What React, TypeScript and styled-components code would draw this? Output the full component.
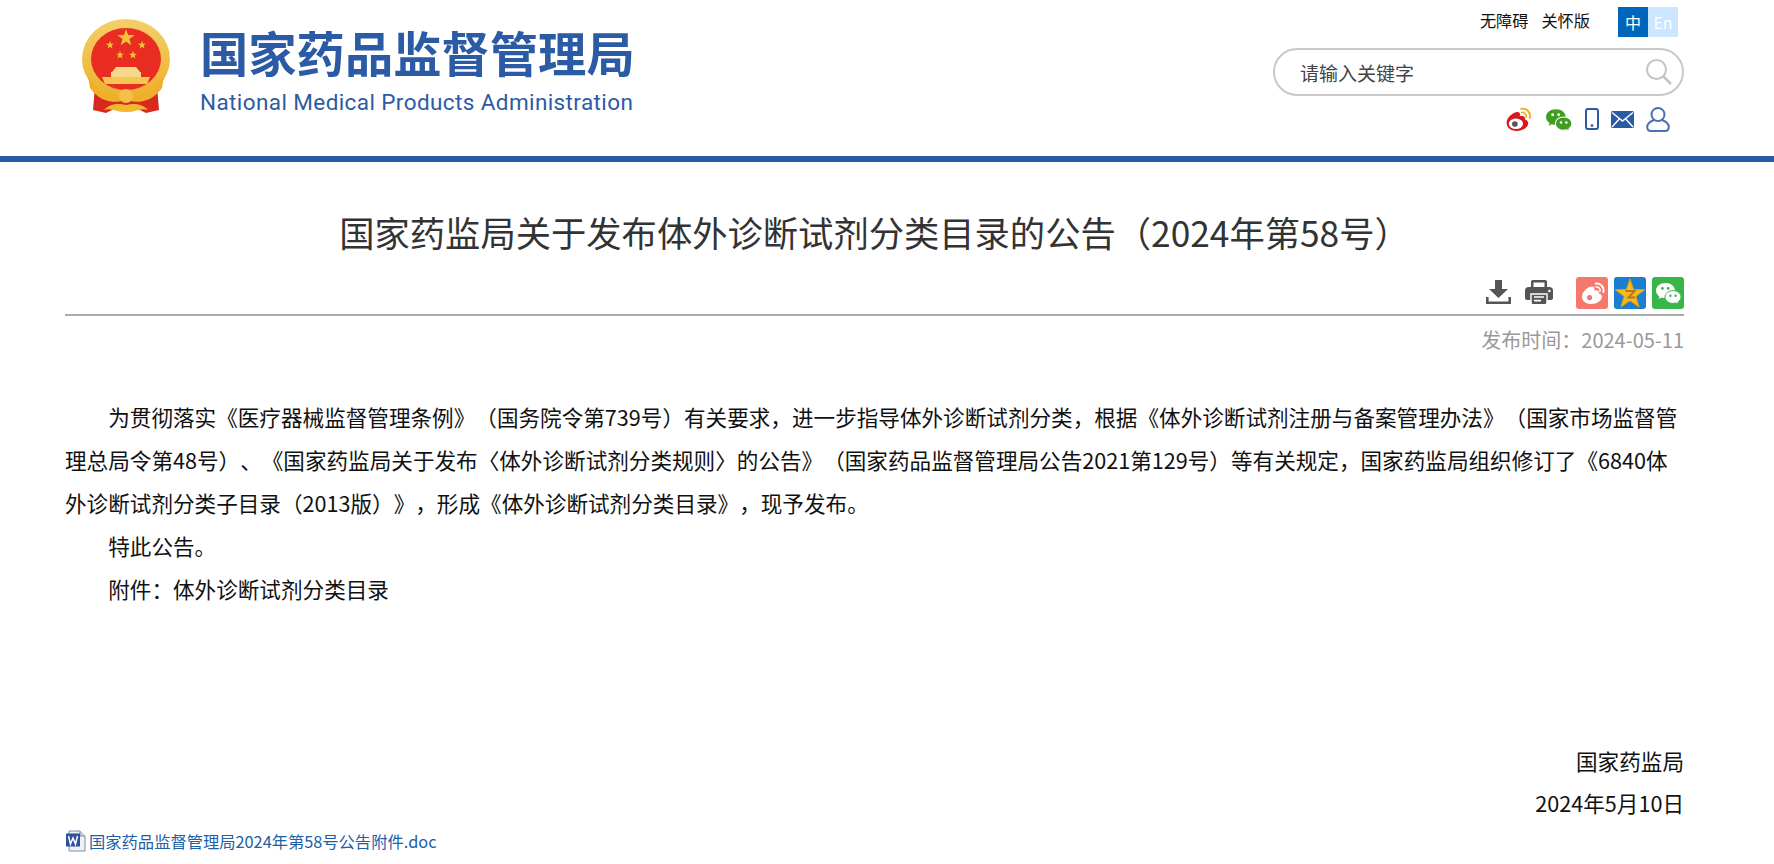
import React from 'react'
import styled, { createGlobalStyle } from 'styled-components'

const GlobalStyle = createGlobalStyle`
  html, body {
    margin: 0;
    padding: 0;
    background: #fff;
    font-family: "Noto Sans CJK SC", "Liberation Sans", sans-serif;
    text-spacing-trim: space-all;
  }
  a { text-decoration: none; }
`

const Page = styled.div`
  width: 1774px;
  height: 864px;
  overflow: hidden;
`

const Header = styled.header`
  height: 156px;
  display: flex;
  justify-content: space-between;
  padding: 0 90px 0 80px;
  box-sizing: border-box;
`

const Brand = styled.div`
  display: flex;
  align-items: flex-start;
  padding-top: 18px;
  gap: 28px;
`

const BrandText = styled.div`
  display: flex;
  flex-direction: column;
  color: #2c5ba6;
`

const BrandName = styled.div`
  font-size: 48.3px;
  line-height: 66px;
  font-weight: 700;
  white-space: nowrap;
`

const BrandEn = styled.div`
  font-family: "Roboto", "Liberation Sans", sans-serif;
  font-size: 22.5px;
  line-height: 28px;
  margin-top: 4px;
  letter-spacing: 0.4px;
  white-space: nowrap;
`

const Tools = styled.div`
  width: 411px;
  display: flex;
  flex-direction: column;
  align-items: stretch;
`

const TopLinks = styled.div`
  display: flex;
  justify-content: flex-end;
  align-items: flex-start;
  padding: 7px 6px 0 0;
  height: 30px;
`

const TopLink = styled.a`
  font-size: 16.2px;
  color: #111;
  margin-right: 13px;
  line-height: 26px;
`

const Lang = styled.span<{ $active?: boolean }>`
  width: 30px;
  height: 30px;
  line-height: 30px;
  text-align: center;
  font-size: 16px;
  color: #fff;
  background: ${p => (p.$active ? '#0066bb' : '#cce6ff')};
`

const LangGroup = styled.div`
  display: flex;
  margin-left: 15px;
`

const Search = styled.div`
  margin-top: 11px;
  height: 48px;
  box-sizing: border-box;
  border: 2px solid #c8c8c8;
  border-radius: 24px;
  display: flex;
  align-items: center;
  justify-content: space-between;
  padding: 0 9px 0 25px;
  font-size: 19px;
  color: #444;
`

const SocialRow = styled.div`
  display: flex;
  justify-content: flex-end;
  align-items: center;
  gap: 12px;
  margin-top: 10px;
  padding-right: 14px;
`

const Bar = styled.div`
  height: 6px;
  background: #2c5ba6;
`

const Main = styled.main`
  padding: 0 90px 0 65px;
`

const Title = styled.h1`
  margin: 0;
  padding-top: 41px;
  height: 58px;
  font-size: 35.3px;
  line-height: 58px;
  font-weight: 400;
  color: #333;
  text-align: center;
  white-space: nowrap;
`

const ShareRow = styled.div`
  margin-top: 10px;
  height: 45px;
  padding-top: 6px;
  box-sizing: border-box;
  border-bottom: 2px solid #aaa;
  display: flex;
  justify-content: flex-end;
  align-items: flex-start;
`

const ShareGroup = styled.div`
  display: flex;
  gap: 6px;
  margin-left: 23px;
`

const ActionGroup = styled.div`
  display: flex;
  gap: 13px;
  padding-top: 2px;
`

const PubDate = styled.div`
  margin-top: 6px;
  text-align: right;
  font-size: 20px;
  line-height: 36px;
  color: #999;
`

const Article = styled.article`
  margin-top: 38px;
  font-size: 21.6px;
  line-height: 42.9px;
  color: #111;
`

const Para = styled.p`
  margin: 0;
  text-indent: 2em;
`

const Sign = styled.p`
  margin: 0;
  text-align: right;
`

const SignBlock = styled.div`
  margin-top: 129px;
`

const Attachment = styled.a`
  display: flex;
  align-items: center;
  gap: 2px;
  margin-top: 4px;
  font-size: 16.3px;
  line-height: 24px;
  color: #2060a8;
`

const starPts = (cx: number, cy: number, r: number, rot = -90) => {
  const pts: string[] = []
  for (let i = 0; i < 10; i++) {
    const a = ((rot + i * 36) * Math.PI) / 180
    const rr = i % 2 === 0 ? r : r * 0.4
    pts.push(`${(cx + rr * Math.cos(a)).toFixed(2)},${(cy + rr * Math.sin(a)).toFixed(2)}`)
  }
  return pts.join(' ')
}

const Emblem = () => (
  <svg width="92" height="96" viewBox="0 0 92 96">
    <defs>
      <linearGradient id="gold" x1="0" y1="0" x2="0" y2="1">
        <stop offset="0" stopColor="#f3cf6a" />
        <stop offset="1" stopColor="#eeb02a" />
      </linearGradient>
    </defs>
    <path d="M15 68 L13 92 L26 95 L36 90 L46 94 L56 90 L66 95 L79 92 L77 68 Z" fill="#d9291f" />
    <ellipse cx="46" cy="41" rx="44" ry="40" fill="url(#gold)" />
    <ellipse cx="46" cy="41" rx="35" ry="31" fill="#ea2d22" />
    <polygon points={starPts(46, 20, 9)} fill="#f6c23c" />
    <polygon points={starPts(30, 27, 4.2)} fill="#f6c23c" />
    <polygon points={starPts(62, 27, 4.2)} fill="#f6c23c" />
    <polygon points={starPts(40, 37, 4.2)} fill="#f6c23c" />
    <polygon points={starPts(53, 37, 4.2)} fill="#f6c23c" />
    <path d="M36 49 H56 L60 54 H32 Z M31 54 H61 V59 H31 Z" fill="#f7d98c" />
    <path d="M22 59 H70 L67 66 H25 Z" fill="#f5c650" />
    <path d="M8 58 C18 74 32 80 46 76 C60 80 74 74 84 58 L82 70 C72 84 58 86 46 82 C34 86 20 84 10 70 Z" fill="#eeb02a" />
    <circle cx="46" cy="78" r="7" fill="#f3c14a" />
    <path d="M24 92 C32 84 40 86 46 87 C52 86 60 84 68 92 C60 89 54 95 46 94 C38 95 32 89 24 92 Z" fill="#f2b92f" />
  </svg>
)

const SearchIcon = () => (
  <svg width="28" height="28" viewBox="0 0 28 28" fill="none" stroke="#c4c4c4" strokeWidth="2">
    <circle cx="11.5" cy="11.5" r="9.5" />
    <path d="M18.5 18.5 L26 26" strokeWidth="2.6" />
  </svg>
)

const WeiboGlyph = ({ body, eye, arc }: { body: string; eye: string; arc: string }) => (
  <>
    <path d="M3 15.5 C3 10.5 9 5.5 13 5.5 C15.5 5.5 15.8 7.6 15 9.5 C18 8.6 20.5 9.6 19.8 12.2 C22 13 23 14.4 23 16 C23 19.6 18 23 12 23 C7 23 3 20.2 3 15.5 Z" fill={body} />
    <ellipse cx="11.6" cy="16.4" rx="6.6" ry="4.8" fill={eye} />
    <circle cx="10.6" cy="16.6" r="2.6" fill={body === '#fff' ? '#f5796d' : '#555'} />
    <path d="M16.5 2.6 C21.5 1.8 25.4 6 24.4 11" fill="none" stroke={arc} strokeWidth="1.9" strokeLinecap="round" />
    <path d="M17 6 C19.6 5.6 21.6 7.6 21 10.2" fill="none" stroke={arc} strokeWidth="1.6" strokeLinecap="round" />
  </>
)

const WeiboIcon = () => (
  <svg width="30" height="26" viewBox="0 0 27 24">
    <WeiboGlyph body="#d7191c" eye="#fff" arc="#edb32e" />
  </svg>
)

const WechatGlyph = ({ back, front, dot }: { back: string; front: string; dot: string }) => (
  <>
    <path d="M10.5 2 C5 2 1 5.4 1 9.6 C1 12 2.3 14 4.4 15.4 L3.6 18 L6.6 16.5 C8 16.9 9.2 17 10.5 17 C16 17 20 13.6 20 9.6 C20 5.4 16 2 10.5 2 Z" fill={back} />
    <path d="M18 9.6 C13.4 9.6 10 12.5 10 16 C10 19.5 13.4 22.4 18 22.4 C19 22.4 20 22.2 21 21.9 L23.6 23.2 L23 21 C25 19.6 26 17.9 26 16 C26 12.5 22.6 9.6 18 9.6 Z" fill={front} stroke={dot} strokeWidth="1" />
    <circle cx="7.4" cy="7.4" r="1.4" fill={dot} />
    <circle cx="13.2" cy="7.4" r="1.4" fill={dot} />
    <circle cx="15.4" cy="14.8" r="1.2" fill={dot} />
    <circle cx="20.6" cy="14.8" r="1.2" fill={dot} />
  </>
)

const WechatIcon = () => (
  <svg width="28" height="25" viewBox="0 0 27 24">
    <WechatGlyph back="#3e9e1f" front="#3e9e1f" dot="#fff" />
  </svg>
)

const PhoneIcon = () => (
  <svg width="14" height="22" viewBox="0 0 14 22">
    <rect x="1" y="1" width="12" height="20" rx="2" fill="#fff" stroke="#2c5ba6" strokeWidth="2" />
    <circle cx="7" cy="17.6" r="1.4" fill="#2c5ba6" />
  </svg>
)

const MailIcon = () => (
  <svg width="23" height="17" viewBox="0 0 23 17">
    <rect width="23" height="17" rx="1.5" fill="#2c5ba6" />
    <path d="M1 1.5 L11.5 10 L22 1.5 M1 16 L8.5 7.8 M22 16 L14.5 7.8" fill="none" stroke="#fff" strokeWidth="1.4" />
  </svg>
)

const UserIcon = () => (
  <svg width="24" height="25" viewBox="0 0 24 25" fill="none" stroke="#4c70b0" strokeWidth="2">
    <ellipse cx="12" cy="7.5" rx="6.5" ry="6.5" />
    <path d="M8 13 C4 14.5 1.2 17 1.2 20 C1.2 22.6 3 24 5 24 H19 C21 24 22.8 22.6 22.8 20 C22.8 17 20 14.5 16 13" />
  </svg>
)

const DownloadIcon = () => (
  <svg width="27" height="26" viewBox="0 0 27 26" fill="#555">
    <path d="M10 1 H17 V10 H23 L13.5 19 L4 10 H10 Z" />
    <path d="M1 18 H3.6 V22.6 H23.4 V18 H26 V25 H1 Z" />
  </svg>
)

const PrintIcon = () => (
  <svg width="28" height="26" viewBox="0 0 28 26">
    <path d="M6 9 V3 C6 1.6 7 1 8 1 H20 C21 1 22 1.6 22 3 V9 Z" fill="#555" />
    <rect x="8.5" y="3.5" width="11" height="6" fill="#fff" />
    <path d="M3.5 8 H24.5 C26.5 8 28 9.5 28 11.5 V19 C28 20.2 27 21 26 21 H2 C1 21 0 20.2 0 19 V11.5 C0 9.5 1.5 8 3.5 8 Z" fill="#555" />
    <path d="M6 15 H22 V23.5 C22 25 21 25.8 20 25.8 H8 C7 25.8 6 25 6 23.5 Z" fill="#555" stroke="#fff" strokeWidth="1.4" />
    <path d="M9 18 H19 M9 21.6 H16" stroke="#fff" strokeWidth="1.6" />
    <circle cx="24.4" cy="12" r="1.3" fill="#fff" />
  </svg>
)

const Tile = styled.span<{ $bg: string }>`
  display: flex;
  align-items: center;
  justify-content: center;
  width: 32px;
  height: 32px;
  border-radius: 3px;
  background: ${p => p.$bg};
`

const QzoneIcon = () => (
  <svg width="30" height="30" viewBox="0 0 30 30">
    <polygon points={starPts(15, 16.5, 15.5)} fill="#f6b91f" stroke="#e39a12" strokeWidth="1" />
    <path d="M10.5 13 H19.5 L13.5 19.5 H20" fill="none" stroke="#b9761a" strokeWidth="2" />
  </svg>
)

const WordIcon = () => (
  <svg width="22" height="22" viewBox="0 0 22 22">
    <path d="M4 1 H15 L20 6 V21 H4 Z" fill="#eef2f8" stroke="#7d8ba8" />
    <path d="M15 1 V6 H20" fill="#cfd8e8" stroke="#7d8ba8" />
    <rect x="1" y="3.5" width="14" height="13" fill="#2f4f9f" />
    <path d="M3.5 6 L5.5 14 L8 8 L10.5 14 L12.5 6" fill="none" stroke="#fff" strokeWidth="1.5" />
  </svg>
)

const App = () => (
  <Page>
    <GlobalStyle />
    <Header>
      <Brand>
        <Emblem />
        <BrandText>
          <BrandName>国家药品监督管理局</BrandName>
          <BrandEn>National Medical Products Administration</BrandEn>
        </BrandText>
      </Brand>
      <Tools>
        <TopLinks>
          <TopLink>无障碍</TopLink>
          <TopLink>关怀版</TopLink>
          <LangGroup>
            <Lang $active>中</Lang>
            <Lang>En</Lang>
          </LangGroup>
        </TopLinks>
        <Search>
          请输入关键字
          <SearchIcon />
        </Search>
        <SocialRow>
          <WeiboIcon />
          <WechatIcon />
          <PhoneIcon />
          <MailIcon />
          <UserIcon />
        </SocialRow>
      </Tools>
    </Header>
    <Bar />
    <Main>
      <Title>国家药监局关于发布体外诊断试剂分类目录的公告（2024年第58号）</Title>
      <ShareRow>
        <ActionGroup>
          <DownloadIcon />
          <PrintIcon />
        </ActionGroup>
        <ShareGroup>
          <Tile $bg="#f4796c">
            <svg width="27" height="24" viewBox="0 0 27 24">
              <WeiboGlyph body="#fff" eye="#fff" arc="#fff" />
            </svg>
          </Tile>
          <Tile $bg="#1a7fd0">
            <QzoneIcon />
          </Tile>
          <Tile $bg="#39b54a">
            <svg width="27" height="24" viewBox="0 0 27 24">
              <WechatGlyph back="#fff" front="#fff" dot="#39b54a" />
            </svg>
          </Tile>
        </ShareGroup>
      </ShareRow>
      <PubDate>发布时间：2024-05-11</PubDate>
      <Article>
        <Para>
          为贯彻落实《医疗器械监督管理条例》（国务院令第739号）有关要求，进一步指导体外诊断试剂分类，根据《体外诊断试剂注册与备案管理办法》（国家市场监督管理总局令第48号）、《国家药监局关于发布〈体外诊断试剂分类规则〉的公告》（国家药品监督管理局公告2021第129号）等有关规定，国家药监局组织修订了《6840体外诊断试剂分类子目录（2013版）》，形成《体外诊断试剂分类目录》，现予发布。
        </Para>
        <Para>特此公告。</Para>
        <Para>附件：体外诊断试剂分类目录</Para>
        <SignBlock>
          <Sign>国家药监局</Sign>
          <Sign>2024年5月10日</Sign>
        </SignBlock>
      </Article>
      <Attachment>
        <WordIcon />
        国家药品监督管理局2024年第58号公告附件.doc
      </Attachment>
    </Main>
  </Page>
)

export default App
